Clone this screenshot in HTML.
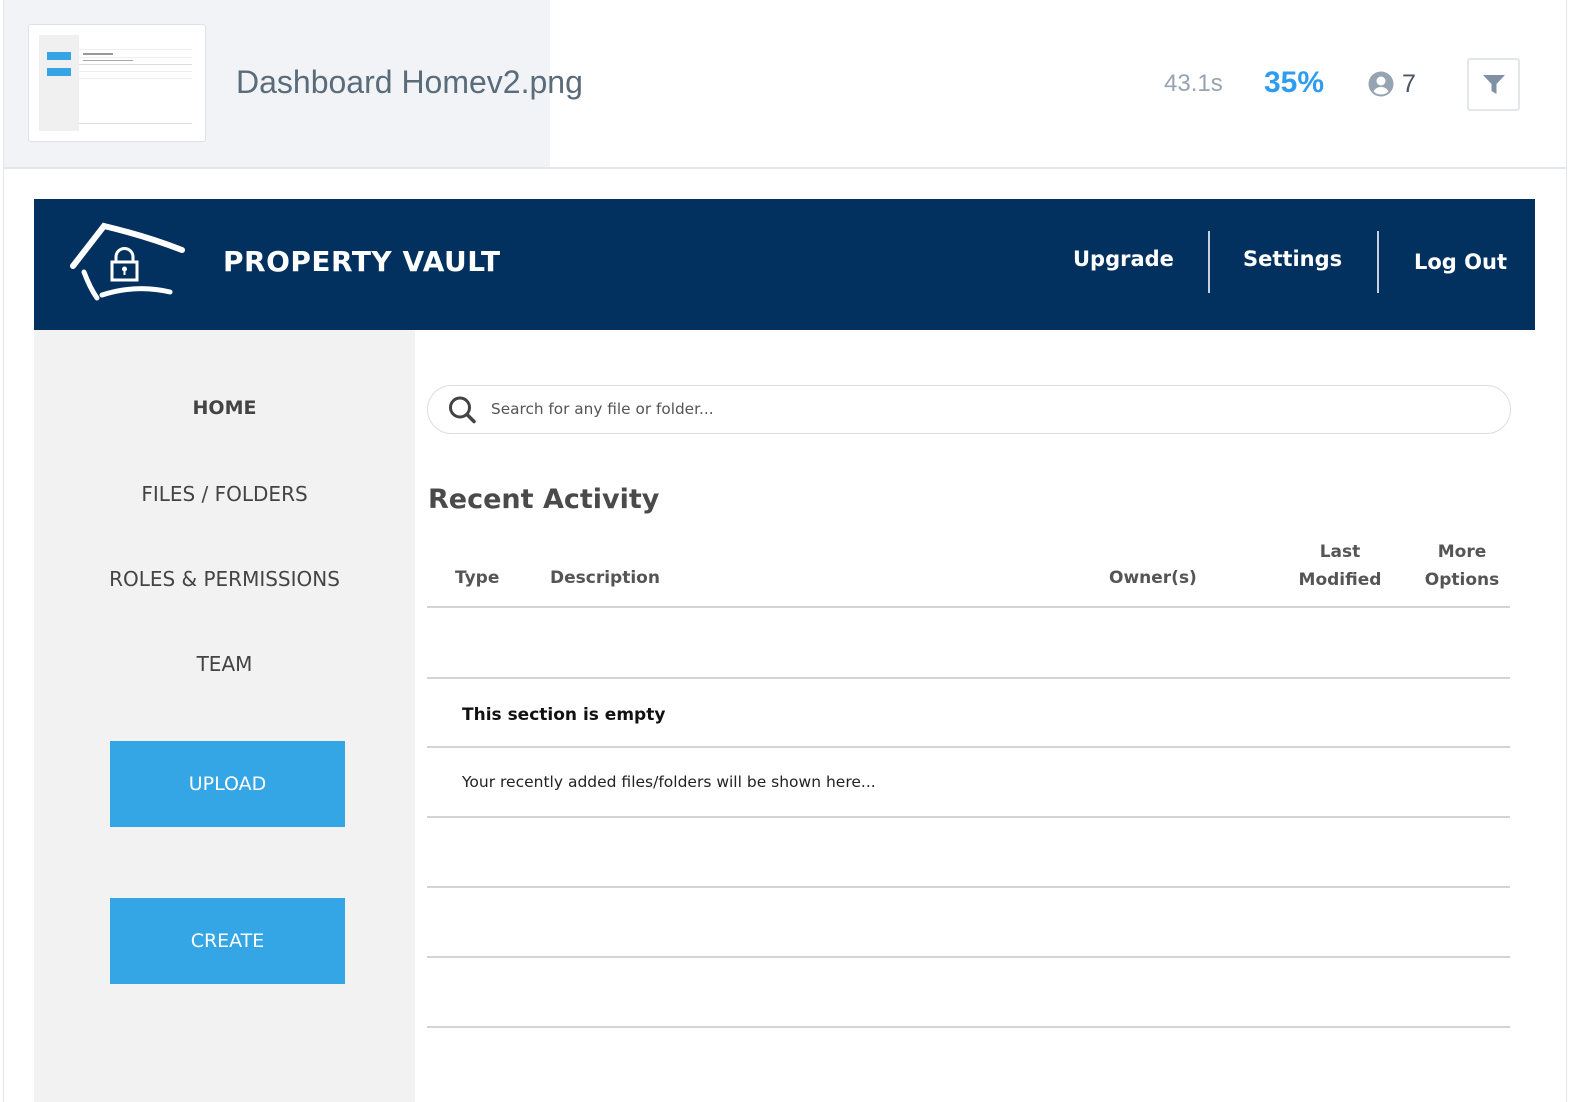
<!DOCTYPE html>
<html><head><meta charset="utf-8"><style>
*{margin:0;padding:0;box-sizing:border-box}
body{width:1578px;height:1102px;background:#fff;position:relative;overflow:hidden;font-family:"Liberation Sans",sans-serif}
.abs{position:absolute}
.sb{font-family:"DejaVu Sans","Liberation Sans",sans-serif}
</style></head><body>
<div class="abs" style="left:3px;top:0;width:1564px;height:1102px;border-left:1px solid #e3e7ec;border-right:1px solid #e3e7ec"></div>
<div class="abs" style="left:4px;top:0;width:546px;height:167px;background:#f1f3f6"></div>
<div class="abs" style="left:3px;top:167px;width:1564px;height:2px;background:#e3e7ec"></div>
<div class="abs" style="left:28px;top:24px;width:178px;height:118px;background:#fff;border:1px solid #dde2e8;border-radius:3px">
 <div class="abs" style="left:10px;top:10px;width:40px;height:96px;background:#f0f0f0"></div>
 <div class="abs" style="left:18px;top:27px;width:24px;height:8px;background:#35a5e6"></div>
 <div class="abs" style="left:18px;top:43px;width:24px;height:8px;background:#35a5e6"></div>
 <div class="abs" style="left:50px;top:24px;width:113px;height:1px;background:#eee"></div>
 <div class="abs" style="left:50px;top:32px;width:113px;height:1px;background:#eee"></div>
 <div class="abs" style="left:50px;top:39px;width:113px;height:1px;background:#ddd"></div>
 <div class="abs" style="left:50px;top:46px;width:113px;height:1px;background:#eee"></div>
 <div class="abs" style="left:50px;top:53px;width:113px;height:1px;background:#eee"></div>
 <div class="abs" style="left:50px;top:98px;width:113px;height:1px;background:#ddd"></div>
 <div class="abs" style="left:54px;top:28px;width:30px;height:2px;background:#999"></div>
 <div class="abs" style="left:54px;top:35px;width:50px;height:1px;background:#aaa"></div>
</div>
<div class="abs" style="left:236px;top:64px;font-size:32px;color:#5a6b7a">Dashboard Homev2.png</div>
<div class="abs" style="left:1164px;top:70px;font-size:24px;color:#95a3b3">43.1s</div>
<div class="abs" style="left:1264px;top:66px;font-size:30px;font-weight:bold;color:#2f9cf0">35%</div>
<svg class="abs" style="left:1368px;top:71px" width="26" height="26" viewBox="0 0 26 26"><circle cx="13" cy="13" r="12.5" fill="#95a3b3"/><circle cx="13" cy="10" r="4.5" fill="#fff"/><path d="M5.5 20.5c2-3.5 4.5-4.5 7.5-4.5s5.5 1 7.5 4.5A11 11 0 0 1 5.5 20.5z" fill="#fff"/></svg>
<div class="abs" style="left:1402px;top:70px;font-size:25px;color:#4a5560">7</div>
<div class="abs" style="left:1467px;top:58px;width:53px;height:53px;border:2px solid #e3e7ec;border-radius:3px"></div>
<svg class="abs" style="left:1482px;top:74px" width="24" height="22" viewBox="0 0 24 22"><path d="M1 1h22l-8.5 9v10l-5-3V10z" fill="#8091a5"/></svg>
<div class="abs" style="left:34px;top:199px;width:1501px;height:131px;background:#03315f"></div>
<svg class="abs" style="left:66px;top:218px" width="124" height="90" viewBox="0 0 124 90"><g fill="none" stroke="#fff" stroke-linecap="round"><path d="M7 48 L38 8 Q80 18 116 32" stroke-width="6"/><path d="M18 54 Q24 70 31 80" stroke-width="5"/><path d="M36 77 Q70 66 104 74" stroke-width="5"/><rect x="46" y="44" width="25" height="18" stroke-width="3"/><path d="M50 44v-5a8.5 8.5 0 0 1 17 0v5" stroke-width="3"/></g><circle cx="58.5" cy="51" r="2.5" fill="#fff"/><rect x="57.5" y="51" width="2" height="6" fill="#fff"/></svg>
<div class="abs sb" style="left:223px;top:245px;font-size:28px;font-weight:bold;color:#fff;letter-spacing:0.5px">PROPERTY VAULT</div>
<div class="abs sb" style="left:1073px;top:247px;font-size:21px;font-weight:bold;color:#fff">Upgrade</div>
<div class="abs" style="left:1208px;top:231px;width:2px;height:62px;background:#c8d0da"></div>
<div class="abs sb" style="left:1243px;top:247px;font-size:21px;font-weight:bold;color:#fff">Settings</div>
<div class="abs" style="left:1377px;top:231px;width:2px;height:62px;background:#c8d0da"></div>
<div class="abs sb" style="left:1414px;top:250px;font-size:21px;font-weight:bold;color:#fff">Log Out</div>
<div class="abs" style="left:34px;top:330px;width:381px;height:772px;background:#f2f2f2"></div>
<div class="abs sb" style="left:34px;top:397px;width:381px;text-align:center;font-size:19px;font-weight:bold;color:#444">HOME</div>
<div class="abs sb" style="left:34px;top:482px;width:381px;text-align:center;font-size:20px;color:#444">FILES / FOLDERS</div>
<div class="abs sb" style="left:34px;top:567px;width:381px;text-align:center;font-size:20px;color:#444">ROLES &amp; PERMISSIONS</div>
<div class="abs sb" style="left:34px;top:652px;width:381px;text-align:center;font-size:20px;color:#444">TEAM</div>
<div class="abs sb" style="left:110px;top:741px;width:235px;height:86px;background:#34a5e5;color:#fff;font-size:19px;text-align:center;line-height:86px">UPLOAD</div>
<div class="abs sb" style="left:110px;top:898px;width:235px;height:86px;background:#34a5e5;color:#fff;font-size:19px;text-align:center;line-height:86px">CREATE</div>
<div class="abs" style="left:427px;top:385px;width:1084px;height:49px;border:1.5px solid #ddd;border-radius:25px"></div>
<svg class="abs" style="left:447px;top:395px" width="32" height="30" viewBox="0 0 32 30"><circle cx="13" cy="12.5" r="9.5" fill="none" stroke="#444" stroke-width="3"/><path d="M20 19.5l7 7" stroke="#444" stroke-width="3.5" stroke-linecap="round"/></svg>
<div class="abs sb" style="left:491px;top:400px;font-size:15.3px;color:#555">Search for any file or folder...</div>
<div class="abs sb" style="left:428px;top:484px;font-size:27px;font-weight:bold;color:#4a4a4a">Recent Activity</div>
<div class="abs sb" style="left:455px;top:568px;font-size:17px;font-weight:bold;color:#555">Type</div>
<div class="abs sb" style="left:550px;top:568px;font-size:17px;font-weight:bold;color:#555">Description</div>
<div class="abs sb" style="left:1109px;top:568px;font-size:17px;font-weight:bold;color:#555">Owner(s)</div>
<div class="abs sb" style="left:1290px;top:538px;width:100px;text-align:center;font-size:17px;font-weight:bold;color:#555;line-height:28px">Last<br>Modified</div>
<div class="abs sb" style="left:1412px;top:538px;width:100px;text-align:center;font-size:17px;font-weight:bold;color:#555;line-height:28px">More<br>Options</div>
<div class="abs" style="left:427px;top:606px;width:1083px;height:2px;background:#d4d4d4"></div>
<div class="abs" style="left:427px;top:677px;width:1083px;height:2px;background:#d4d4d4"></div>
<div class="abs sb" style="left:462px;top:705px;font-size:17px;font-weight:bold;color:#111">This section is empty</div>
<div class="abs" style="left:427px;top:746px;width:1083px;height:2px;background:#d4d4d4"></div>
<div class="abs sb" style="left:462px;top:773px;font-size:15.5px;color:#222">Your recently added files/folders will be shown here...</div>
<div class="abs" style="left:427px;top:816px;width:1083px;height:2px;background:#d4d4d4"></div>
<div class="abs" style="left:427px;top:886px;width:1083px;height:2px;background:#d4d4d4"></div>
<div class="abs" style="left:427px;top:956px;width:1083px;height:2px;background:#d4d4d4"></div>
<div class="abs" style="left:427px;top:1026px;width:1083px;height:2px;background:#d4d4d4"></div>
</body></html>
